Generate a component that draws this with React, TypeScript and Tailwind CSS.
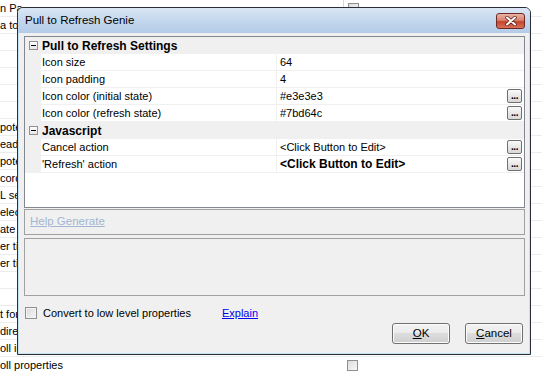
import React from "react";

const bgTexts = [
  "n Pa", "a to", "", "", "", "", "", "pote", "ead", "pote", "cord", "L se", "elect", "ate",
  "er til", "er til", "", "", "t for", "dire", "oll ir", "oll properties",
];

function Ellipsis() {
  return (
    <div className="absolute right-[2px] top-[1px] w-[15px] h-[14px] rounded-[2px] border border-[#707070] bg-gradient-to-b from-[#fafafa] to-[#d8d8d8] flex items-end justify-center">
      <span className="text-[10px] leading-[10px] font-bold tracking-[-0.5px] mb-[1px]">...</span>
    </div>
  );
}

function Collapse() {
  return (
    <div className="w-[9px] h-[9px] border border-[#919191] bg-gradient-to-b from-white to-[#e6e6e6] flex items-center justify-center">
      <div className="w-[5px] h-[1px] bg-black" />
    </div>
  );
}

function Category({ label }: { label: string }) {
  return (
    <div className="h-[17px] flex items-center bg-[#f0f0f0]">
      <div className="w-[16px] flex justify-center pl-[1px]">
        <Collapse />
      </div>
      <span className="pl-[1px] font-bold text-[12px]">{label}</span>
    </div>
  );
}

function Row({ label, value, btn, bold }: { label: string; value: string; btn?: boolean; bold?: boolean }) {
  return (
    <div className="h-[17px] flex">
      <div className="w-[16px] bg-[#f0f0f0]" />
      <div className="flex-1 flex border-b border-[#f0f0f0] bg-white">
        <div className="w-[236px] pl-[1px] flex items-center border-r border-[#f0f0f0]">
          <span>{label}</span>
        </div>
        <div className="flex-1 relative flex items-center pl-[3px]">
          <span className={bold ? "font-bold text-[12px]" : ""}>{value}</span>
          {btn && <Ellipsis />}
        </div>
      </div>
    </div>
  );
}

function WinButton({ children }: { children: React.ReactNode }) {
  return (
    <div className="w-[58px] h-[21px] rounded-[3px] border border-[#707070] bg-[linear-gradient(to_bottom,#f2f2f2_0%,#ebebeb_50%,#dddddd_50%,#cfcfcf_100%)] flex items-center justify-center shadow-[inset_0_0_0_1px_#fcfcfc]">
      {children}
    </div>
  );
}

export default function App() {
  return (
    <div className="relative w-[542px] h-[372px] bg-white overflow-hidden text-[11px] text-black font-['Liberation_Sans',sans-serif]">
      {/* background table */}
      <div className="flex flex-col">
        {bgTexts.map((t, i) => (
          <div key={i} className="h-[17px] shrink-0 flex border-b border-[#ececec]">
            <div className="w-[343px] flex items-center whitespace-nowrap">{t}</div>
            <div className={"flex-1 flex items-center pl-[4px] " + (i === 0 ? "border-l border-[#d8d8d8]" : "")}>
              {(i === 0 || i === 21) && (
                <div className="w-[11px] h-[11px] border border-[#8f8f8f] bg-gradient-to-br from-[#dcdcdc] to-[#f8f8f8]" />
              )}
            </div>
          </div>
        ))}
      </div>

      {/* dialog */}
      <div className="absolute left-[17px] top-[7px] w-[514px] h-[348px] border border-[#2a2f36] rounded-t-[6px] bg-[#c4e3f5] flex flex-col overflow-hidden">
        <div className="relative h-[25px] shrink-0 flex items-center bg-gradient-to-b from-[#dae6f4] via-[#c4d7ed] to-[#b4cbe7]">
          <span className="ml-[7px] text-[11.5px] mt-[1px]">Pull to Refresh Genie</span>
          <div className="absolute right-[5px] top-[5px] w-[29px] h-[16px] rounded-[3px] border border-[#6e2a22] bg-[linear-gradient(to_bottom,#eab3a6_0%,#d8836f_45%,#c4432c_55%,#d9715a_100%)] flex items-center justify-center">
            <svg width="12" height="10" viewBox="0 0 12 10">
              <path d="M2 1.5 L10 8.5 M10 1.5 L2 8.5" stroke="#5a1a12" strokeWidth="3.4" strokeLinecap="round" />
              <path d="M2 1.5 L10 8.5 M10 1.5 L2 8.5" stroke="#ffffff" strokeWidth="2" strokeLinecap="round" />
            </svg>
          </div>
        </div>
        <div className="flex-1 mx-[1px] mb-[1px] bg-[#f0f0f0] flex flex-col pl-[5px] pr-[4px] pt-[3px]">
          {/* property grid */}
          <div className="h-[172px] shrink-0 border border-[#828790] bg-white flex flex-col">
            <Category label="Pull to Refresh Settings" />
            <Row label="Icon size" value="64" />
            <Row label="Icon padding" value="4" />
            <Row label="Icon color (initial state)" value="#e3e3e3" btn />
            <Row label="Icon color (refresh state)" value="#7bd64c" btn />
            <Category label="Javascript" />
            <Row label="Cancel action" value="<Click Button to Edit>" btn />
            <Row label="'Refresh' action" value="<Click Button to Edit>" btn bold />
          </div>
          {/* help */}
          <div className="mt-[1px] h-[26px] shrink-0 border border-[#a0a0a0] flex items-center pl-[5px]">
            <span className="underline text-[#a3b6d2] text-[11.5px]">Help Generate</span>
          </div>
          <div className="mt-[3px] h-[58px] shrink-0 border border-[#a0a0a0]" />
          {/* checkbox row */}
          <div className="mt-[11px] h-[12px] flex items-center">
            <div className="ml-[1px] w-[12px] h-[12px] border border-[#8f8f8f] bg-gradient-to-br from-[#dadada] to-[#f6f6f6] shadow-[inset_0_0_0_1px_#f4f4f4]" />
            <span className="ml-[6px] text-[11px]">Convert to low level properties</span>
            <span className="ml-[31px] text-[11px] underline text-[#0000ee]">Explain</span>
          </div>
          {/* buttons */}
          <div className="mt-[4px] flex justify-end gap-[15px] pr-[2px]">
            <WinButton>
              <span className="text-[11.5px]"><span className="underline">O</span>K</span>
            </WinButton>
            <WinButton>
              <span className="text-[11.5px]"><span className="underline">C</span>ancel</span>
            </WinButton>
          </div>
        </div>
      </div>
    </div>
  );
}
